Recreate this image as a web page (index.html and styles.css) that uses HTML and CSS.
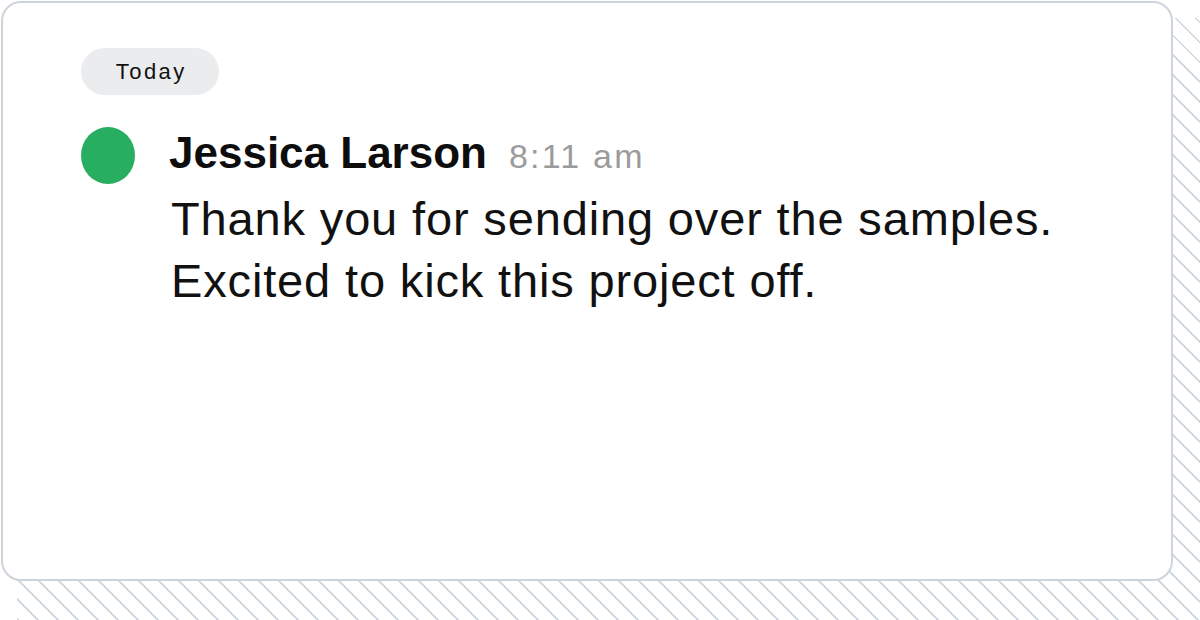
FILE: index.html
```html
<!DOCTYPE html>
<html>
<head>
<meta charset="utf-8">
<link rel="stylesheet" href="styles.css">
</head>
<body>
<div class="stage">
  <div class="card">
    <div class="day-pill">Today</div>
    <div class="message">
      <div class="avatar"></div>
      <div class="msg-body">
        <div class="msg-head">
          <span class="author">Jessica Larson</span>
          <span class="time">8:11 am</span>
        </div>
        <p class="msg-text">Thank you for sending over the samples.<br>Excited to kick this project off.</p>
      </div>
    </div>
  </div>
</div>
</body>
</html>
```
FILE: styles.css
```css
html, body {
  margin: 0;
  padding: 0;
  background: #ffffff;
}
body {
  width: 1200px;
  height: 620px;
  overflow: hidden;
  font-family: "Liberation Sans", Arial, sans-serif;
  color: #111111;
}
.stage {
  position: relative;
  width: 1200px;
  height: 620px;
  padding: 1px 0 0 1px;
  box-sizing: border-box;
}
.stage::before {
  content: "";
  position: absolute;
  left: 17px;
  top: 18px;
  right: 0;
  bottom: 0;
  background: repeating-linear-gradient(45deg, #d2d9e0 0, #d2d9e0 1.6px, transparent 1.6px, transparent 14.14px);
}
.card {
  position: relative;
  width: 1172px;
  height: 580px;
  box-sizing: border-box;
  background: #ffffff;
  border: 2px solid #cdd4dc;
  border-radius: 20px;
  padding: 45px 0 0 78px;
}
.day-pill {
  display: inline-flex;
  align-items: center;
  justify-content: center;
  width: 138px;
  height: 47px;
  box-sizing: border-box;
  padding-left: 2.5px;
  border-radius: 24px;
  background: #ebecee;
  font-size: 22px;
  letter-spacing: 2.5px;
  color: #111111;
}
.message {
  display: flex;
  gap: 34px;
  margin-top: 32px;
}
.avatar {
  flex: none;
  width: 54px;
  height: 57px;
  border-radius: 50%;
  background: #27ae60;
}
.msg-body {
  display: flex;
  flex-direction: column;
}
.msg-head {
  display: flex;
  align-items: baseline;
  gap: 22px;
  line-height: 52px;
}
.author {
  font-size: 44px;
  font-weight: 700;
  color: #0d0d0d;
}
.time {
  font-size: 34px;
  letter-spacing: 2.2px;
  color: #9b9b9b;
}
.msg-text {
  margin: 6.4px 0 0 2px;
  font-size: 47px;
  letter-spacing: 0.85px;
  line-height: 61.5px;
  color: #111111;
}
```
